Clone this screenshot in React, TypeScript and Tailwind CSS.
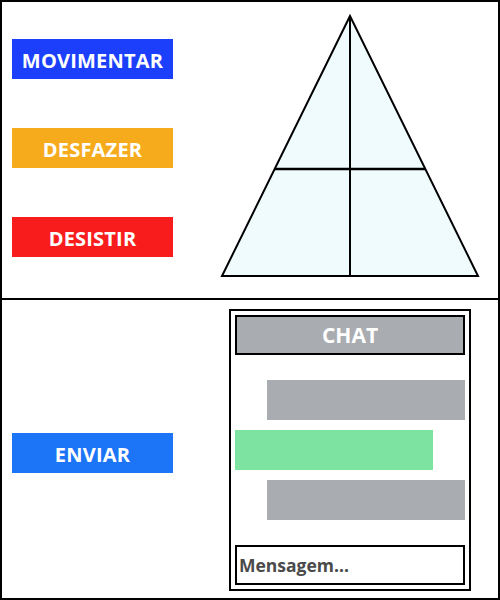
import React from 'react';

const font = { fontFamily: '"Open Sans", "Noto Sans", sans-serif' };

function ActionButton({ label, color }: { label: string; color: string }) {
  return (
    <button
      className={`w-[161px] h-[40px] flex items-center justify-center pt-[3px] text-white font-bold text-[20px] tracking-[0.2px] leading-none ${color}`}
    >
      {label}
    </button>
  );
}

function Triangle() {
  return (
    <svg width="260" height="264" viewBox="0 0 260 264" className="ml-[47px] mt-[12px] shrink-0">
      <polygon points="130,2 2,262 258,262" fill="#effbfd" stroke="#000" strokeWidth="2" strokeLinejoin="miter" />
      <line x1="130" y1="2" x2="130" y2="262" stroke="#000" strokeWidth="2" />
      <line x1="54.7" y1="155" x2="205.3" y2="155" stroke="#000" strokeWidth="2.5" />
    </svg>
  );
}

export default function App() {
  return (
    <div className="w-[500px] h-[600px] bg-white overflow-hidden" style={font}>
      {/* top: actions + board */}
      <div className="h-[300px] border-2 border-black flex">
        <div className="flex flex-col gap-[49px] pt-[37px] pl-[10px]">
          <ActionButton label="MOVIMENTAR" color="bg-[#1b3ffa]" />
          <ActionButton label="DESFAZER" color="bg-[#f6ab1d]" />
          <ActionButton label="DESISTIR" color="bg-[#f91c1c]" />
        </div>
        <Triangle />
      </div>

      {/* bottom: chat */}
      <div className="h-[300px] border-2 border-t-0 border-black flex">
        <div className="pl-[10px] pt-[133px]">
          <ActionButton label="ENVIAR" color="bg-[#1c74f7]" />
        </div>
        <div className="ml-[56px] mt-[9px] w-[242px] h-[282px] border-2 border-black p-[4px] flex flex-col">
          <div className="h-[40px] border-2 border-black bg-[#a9acb0] flex items-center justify-center pt-[2px] text-white font-bold text-[21px]">
            CHAT
          </div>
          <div className="mt-[25px] self-end w-[198px] h-[40px] bg-[#a9acb0]" />
          <div className="mt-[10px] w-[198px] h-[40px] bg-[#7de3a0]" />
          <div className="mt-[10px] self-end w-[198px] h-[40px] bg-[#a9acb0]" />
          <div className="mt-[25px] h-[40px] border-2 border-black flex items-center pl-[2px] text-[17.5px] font-bold text-[#4a4a4a]">
            Mensagem...
          </div>
        </div>
      </div>
    </div>
  );
}
